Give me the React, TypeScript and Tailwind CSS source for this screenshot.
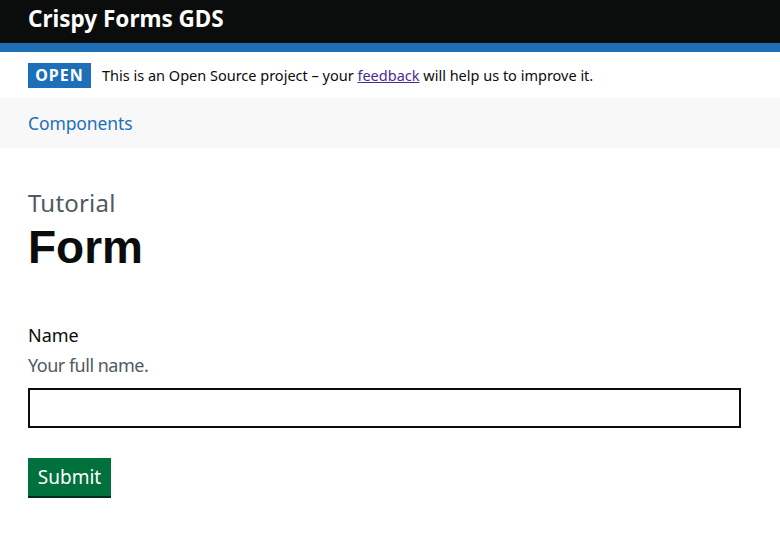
import React from "react";

export default function App() {
  const f = { fontFamily: '"Noto Sans", Arial, sans-serif' } as React.CSSProperties;
  return (
    <div className="min-h-[537px] bg-white text-[#0b0c0c]" style={f}>
      <header className="bg-[#0b0c0c]">
        <div className="px-[28px] h-[43px] flex items-start pt-[6px]">
          <span className="text-white font-bold text-[22.5px] leading-[26px]">Crispy Forms GDS</span>
        </div>
        <div className="h-[9px] bg-[#1d70b8]" />
      </header>
      <div className="px-[28px] h-[46px] flex items-center pt-[2px]">
        <span className="bg-[#1d70b8] text-white font-bold text-[16px] tracking-[1px] h-[25px] w-[63px] flex items-center justify-center -mt-[2px]">OPEN</span>
        <span className="ml-[11px] text-[14.5px]">
          This is an Open Source project – your{" "}
          <a href="#" className="text-[#4c2c92] underline">feedback</a> will help us to improve it.
        </span>
      </div>
      <nav className="bg-[#f8f8f8] h-[50px] px-[28px] flex items-center">
        <a href="#" className="text-[#1d70b8] text-[17.5px] tracking-[-0.1px]">Components</a>
      </nav>
      <main className="px-[28px] pt-[40px]">
        <div className="text-[#505a5f] text-[24px] leading-[30px] tracking-[0.2px]">Tutorial</div>
        <h1 className="font-bold text-[46px] leading-[50px] mt-[4px]" style={{ fontFamily: '"Liberation Sans", Arial, sans-serif' }}>Form</h1>
        <div className="mt-[51px]">
          <label className="block text-[18px] leading-[25px]">Name</label>
          <div className="text-[#505a5f] text-[18px] leading-[25px] mt-[5px] tracking-[-0.5px]">Your full name.</div>
          <input className="mt-[10px] block w-[713px] h-[40px] border-2 border-[#0b0c0c] outline-none" />
          <button className="mt-[30px] bg-[#00703c] text-white text-[19px] h-[38px] w-[83px] shadow-[0_2px_0_#002d18]">Submit</button>
        </div>
      </main>
    </div>
  );
}
